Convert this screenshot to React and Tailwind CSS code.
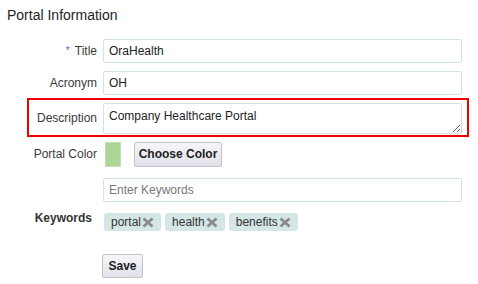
import React from 'react';

const XIcon = () => (
  <svg width="12" height="11" viewBox="0 0 12 11" className="shrink-0">
    <path d="M1.5 1.5 L10.5 9.5 M10.5 1.5 L1.5 9.5" stroke="#8a8a8a" strokeWidth="2.8" />
  </svg>
);

function Tag({ label }) {
  return (
    <span className="flex items-center h-[18px] pl-[7px] pr-[7px] gap-[1px] rounded-[3px] bg-[#d5e6e6] text-[#333]">
      {label}
      <XIcon />
    </span>
  );
}

function Row({ label, children, className = '' }) {
  return (
    <div className={`flex items-center ${className}`}>
      <div className="w-[97px] text-right text-[#3a3a3a] shrink-0">{label}</div>
      <div className="ml-[6px] flex items-center">{children}</div>
    </div>
  );
}

export default function App() {
  const inputCls =
    'w-[359px] h-[24px] border border-[#d3e3e3] rounded-[2px] px-[5px] text-[12px] text-[#222] outline-none placeholder:text-[#777]';

  return (
    <div className="w-[478px] h-[284px] bg-white font-['Liberation_Sans',Arial,sans-serif] text-[12px] overflow-hidden">
      <h2 className="pl-[7px] pt-[6px] text-[14px] leading-[18px] text-[#1e1e1e]">Portal Information</h2>

      <Row className="mt-[15px] h-[24px]" label={<><span className="text-[#4a7ec4] align-top text-[11px] mr-[5px]">*</span>Title</>}>
        <input className={inputCls} defaultValue="OraHealth" />
      </Row>

      <Row className="mt-[8px] h-[24px]" label="Acronym">
        <input className={inputCls} defaultValue="OH" />
      </Row>

      {/* highlighted description row */}
      <div className="mt-[3px] ml-[27px] w-[442px] h-[39px] border-2 border-[#ee0000] flex items-start pt-[3px]">
        <div className="w-[68px] text-right text-[#3a3a3a] shrink-0 mt-[6px]">Description</div>
        <textarea
          className="ml-[6px] w-[359px] h-[31px] border border-[#d3e3e3] rounded-[2px] px-[5px] pt-[5px] text-[12px] leading-[14px] text-[#222] outline-none"
          defaultValue="Company Healthcare Portal"
        />
      </div>

      <Row className="mt-[4px] h-[26px]" label="Portal Color">
        <div className="ml-[2px] w-[16px] h-[25px] bg-[#acd596] border border-[#c2dfb4]" />
        <button className="ml-[13px] w-[88px] h-[25px] border border-[#c3c3cc] rounded-[2px] bg-gradient-to-b from-[#f6f6fa] to-[#e1e1ea] font-bold text-[#222]">
          Choose Color
        </button>
      </Row>

      <div className="mt-[11px] flex items-start">
        <div className="w-[92px] text-right text-[#333] font-bold shrink-0 pt-[33px] leading-[14px]">Keywords</div>
        <div className="ml-[11px] flex flex-col">
          <input className={inputCls} placeholder="Enter Keywords" />
          <div className="mt-[11px] ml-[1px] flex gap-[4px]">
            <Tag label="portal" />
            <Tag label="health" />
            <Tag label="benefits" />
          </div>
        </div>
      </div>

      <div className="mt-[23px] ml-[102px]">
        <button className="w-[41px] h-[24px] border border-[#c3c3cc] rounded-[2px] bg-gradient-to-b from-[#f6f6fa] to-[#e1e1ea] font-bold text-[#222]">
          Save
        </button>
      </div>
    </div>
  );
}
